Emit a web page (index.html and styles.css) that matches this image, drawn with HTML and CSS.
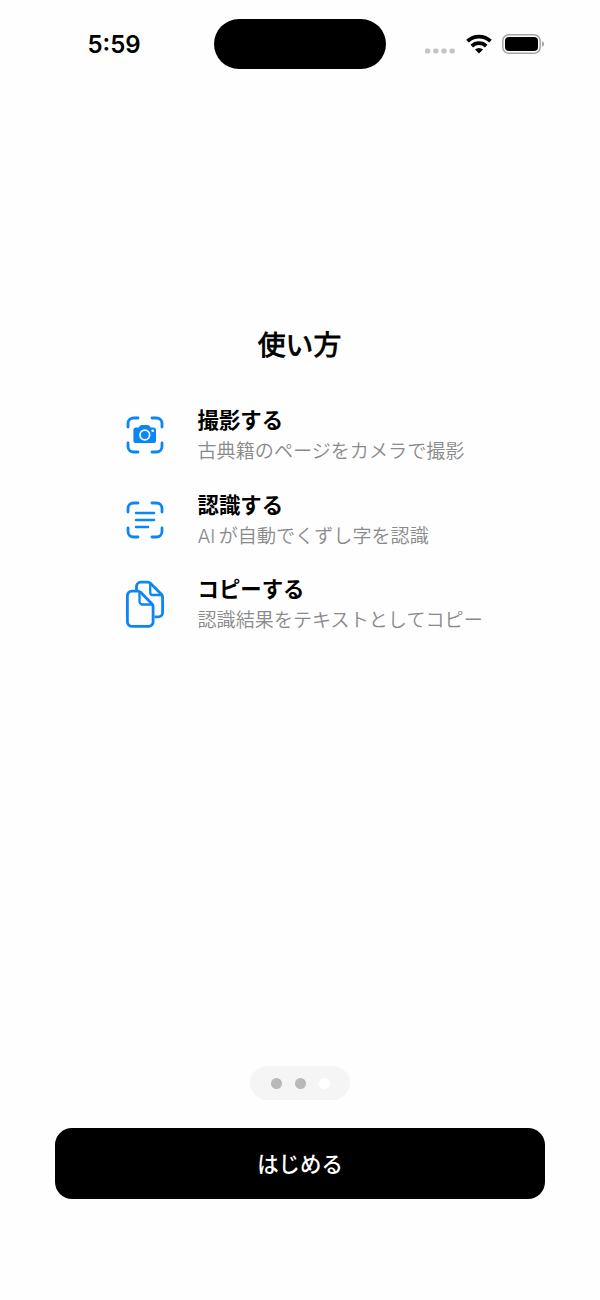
FILE: index.html
```html
<!DOCTYPE html>
<html lang="ja">
<head>
    <meta charset="UTF-8">
    <meta name="viewport" content="width=device-width, initial-scale=1.0">
    <title>使い方</title>
    <link rel="stylesheet" href="styles.css">
</head>
<body>

    <div class="status-bar">
        <div class="time">5:59</div>
        <div class="island"></div>
        <div class="status-icons">
            <svg class="signal" width="30" height="6" viewBox="0 0 30 6" fill="#c4c4c4">
                <rect x="0" y="0.5" width="5.2" height="5" rx="1.8"/>
                <rect x="8.2" y="0.5" width="5.2" height="5" rx="1.8"/>
                <rect x="16.4" y="0.5" width="5.2" height="5" rx="1.8"/>
                <rect x="24.6" y="0.5" width="5.2" height="5" rx="1.8"/>
            </svg>
            <svg class="wifi" width="26" height="20" viewBox="0 0 26 20" fill="none" stroke="#000" stroke-width="3.8">
                <path d="M1.5 7.2a16.5 16.5 0 0 1 23 0"/>
                <path d="M5.8 12.1a10.3 10.3 0 0 1 14.4 0"/>
                <path d="M13 19.6l-4-4a5.7 5.7 0 0 1 8 0z" fill="#000" stroke="none"/>
            </svg>
            <svg class="battery" width="43" height="20" viewBox="0 0 43 20">
                <rect x="0.8" y="0.8" width="37.4" height="18.4" rx="6" fill="none" stroke="#a3a3a3" stroke-width="1.5"/>
                <rect x="3" y="3" width="33" height="14" rx="4" fill="#000"/>
                <path d="M40 7.2c1.3.4 2.1 1.5 2.1 2.8s-.8 2.4-2.1 2.8z" fill="#a3a3a3"/>
            </svg>
        </div>
    </div>

    <div class="content">
        <h1 class="title">使い方</h1>

        <div class="step">
            <svg class="step-icon" width="40" height="52" viewBox="0 0 40 52" fill="none" stroke="#0a86f5" stroke-width="2.8" stroke-linecap="round">
                <path d="M3 17v-3.5A5.5 5.5 0 0 1 8.5 8H13M27 8h4.500a5.500 5.500 0 0 1 5.500 5.500V17M37 33v3.500a5.500 5.500 0 0 1-5.500 5.500H27M13 42H8.500A5.500 5.500 0 0 1 3 36.500V33"/>
                <path d="M11 17.500h2.700l1.500-1.900c.4-.5.900-.7 1.500-.7h6c.6 0 1.100.2 1.500.7l1.500 1.900h2.700a2.600 2.600 0 0 1 2.600 2.600v10.300a2.600 2.600 0 0 1-2.600 2.600H11a2.600 2.600 0 0 1-2.600-2.600V20.100a2.600 2.600 0 0 1 2.600-2.600z" fill="#0a86f5" stroke="none"/>
                <circle cx="19.800" cy="25" r="4.800" stroke="#fff" stroke-width="1.700"/>
                <circle cx="27.700" cy="20.800" r="1.300" fill="#fff" stroke="none"/>
            </svg>
            <div class="step-text">
                <h2>撮影する</h2>
                <p>古典籍のページをカメラで撮影</p>
            </div>
        </div>

        <div class="step">
            <svg class="step-icon" width="40" height="52" viewBox="0 0 40 52" fill="none" stroke="#0a86f5" stroke-width="2.8" stroke-linecap="round">
                <path d="M3 17v-3.500a5.500 5.500 0 0 1 5.500-5.500H13M27 8h4.500a5.500 5.500 0 0 1 5.500 5.500V17M37 33v3.500a5.500 5.500 0 0 1-5.500 5.500H27M13 42H8.500A5.500 5.500 0 0 1 3 36.500V33"/>
                <path d="M11 18h18M11 25h18M11 32h12" stroke-width="2.500"/>
            </svg>
            <div class="step-text">
                <h2>認識する</h2>
                <p>AI が自動でくずし字を認識</p>
            </div>
        </div>

        <div class="step">
            <svg class="step-icon" width="40" height="52" viewBox="0 0 40 52" fill="none" stroke="#0a86f5" stroke-width="2.8" stroke-linejoin="round">
                <path d="M11.500 12V7.500A4.300 4.300 0 0 1 15.800 3.200h7c1 0 1.900.4 2.600 1.100L36.600 15.500c.7.7 1 1.500 1 2.500v15.500a4.300 4.300 0 0 1-4.300 4.300H29.500"/>
                <path d="M25.200 4v9.500a2.500 2.500 0 0 0 2.500 2.500h9.500" stroke-width="2.300"/>
                <path d="M2.400 16.500a4.300 4.300 0 0 1 4.300-4.300h6.300c1 0 1.900.4 2.600 1.100l11.500 11.700c.7.700 1 1.500 1 2.500v15.500a4.300 4.300 0 0 1-4.300 4.300H6.700a4.300 4.300 0 0 1-4.300-4.300z"/>
                <path d="M14.500 13v9.500a3 3 0 0 0 3 3h10" stroke-width="2.300"/>
            </svg>
            <div class="step-text">
                <h2>コピーする</h2>
                <p>認識結果をテキストとしてコピー</p>
            </div>
        </div>
    </div>

    <div class="footer">
        <div class="page-dots">
            <span class="dot"></span>
            <span class="dot"></span>
            <span class="dot active"></span>
        </div>
        <button class="btn">はじめる</button>
    </div>

</body>
</html>
```
FILE: styles.css
```css
* {
    box-sizing: border-box;
}
body {
    background-color: #fefefe;
    color: #000;
    font-family: "Noto Sans CJK JP", sans-serif;
    margin: 0;
    height: 1300px;
    display: flex;
    flex-direction: column;
}
.status-bar {
    display: flex;
    justify-content: space-between;
    height: 88px;
    padding: 19px 55px 0 87.5px;
}
.time {
    width: 126.5px;
    font-family: Inter, sans-serif;
    font-size: 24px;
    font-weight: 600;
    line-height: 52px;
}
.island {
    width: 172px;
    height: 50px;
    border-radius: 25px;
    background-color: #000;
}
.status-icons {
    display: flex;
    width: 159px;
    height: 50px;
    align-items: center;
    justify-content: flex-end;
}
.signal {
    margin: 13px 11px 0 0;
}
.wifi {
    margin-right: 10px;
}
.content {
    flex: 1;
    padding: 235px 0 0 125px;
}
.title {
    width: 349px;
    margin: 0 0 41px;
    font-size: 27.8px;
    font-weight: 400;
    line-height: 40px;
    text-align: center;
    -webkit-text-stroke: 0.9px #000;
}
.step {
    display: flex;
    align-items: flex-start;
    height: 64px;
    margin-bottom: 20.7px;
}
.step-icon {
    margin: 6px 32.5px 0 0;
}
.step-text h2 {
    margin: 0;
    font-size: 21.4px;
    font-weight: bold;
    line-height: 30px;
}
.step-text p {
    margin: 0;
    color: #8a8a8a;
    font-family: Inter, "Noto Sans CJK JP", sans-serif;
    font-size: 19.1px;
    font-weight: 350;
    line-height: 35px;
    white-space: nowrap;
    word-spacing: -2px;
}
.footer {
    display: flex;
    flex-direction: column;
    align-items: center;
    height: 234px;
}
.page-dots {
    display: flex;
    align-items: center;
    justify-content: center;
    gap: 13px;
    width: 100px;
    height: 34px;
    margin-bottom: 28px;
    border-radius: 17px;
    background-color: #f5f5f5;
}
.dot {
    width: 11px;
    height: 11px;
    border-radius: 50%;
    background-color: #b8b8b8;
}
.dot.active {
    background-color: #fff;
}
.btn {
    width: 490px;
    height: 71px;
    padding: 0 0 2px;
    border: none;
    border-radius: 17px;
    background-color: #000;
    color: #fff;
    font-family: inherit;
    font-size: 21.4px;
    font-weight: 500;
    cursor: pointer;
}
```
